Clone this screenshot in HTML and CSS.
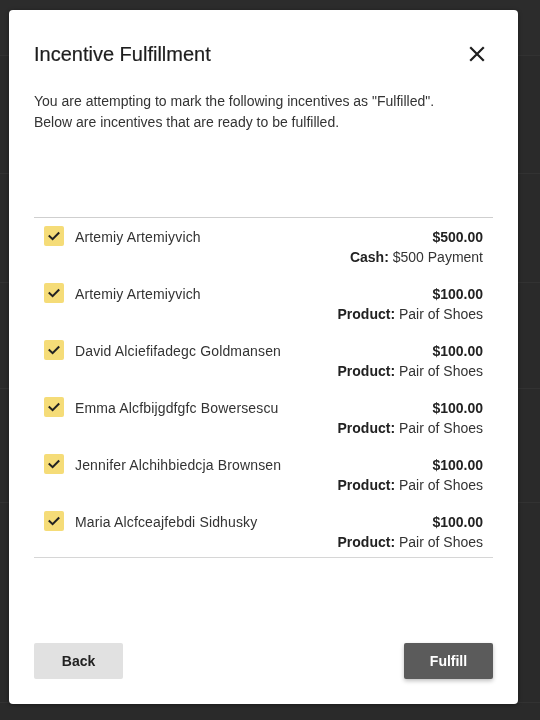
FILE: index.html
```html
<!DOCTYPE html>
<html>
<head>
<meta charset="utf-8">
<link rel="stylesheet" href="styles.css">
</head>
<body>
<div class="page">
  <div class="bg-row r1"></div>
  <div class="bg-row r2"></div>
  <div class="bg-row r3"></div>
  <div class="bg-row r4"></div>
  <div class="bg-row r5"></div>
  <div class="bg-row r6"></div>
</div>
<div class="overlay">
  <div class="modal">
    <div class="modal-head">
      <h1 class="title">Incentive Fulfillment</h1>
      <button class="close" aria-label="Close">
        <svg width="16" height="16" viewBox="0 0 16 16"><path d="M2 2 L14 14 M14 2 L2 14" stroke="#1e1e1e" stroke-width="2.2" stroke-linecap="square" fill="none"/></svg>
      </button>
    </div>
    <p class="desc">You are attempting to mark the following incentives as "Fulfilled".<br>Below are incentives that are ready to be fulfilled.</p>
    <div class="list">
      <div class="row">
        <span class="check"><svg width="20" height="20" viewBox="0 0 20 20"><path d="M5.5 10.2 L8.6 13.2 L14.5 7.2" stroke="#222" stroke-width="2" fill="none" stroke-linecap="square"/></svg></span>
        <span class="name">Artemiy Artemiyvich</span>
        <div class="info"><div class="amount">$500.00</div><div class="detail"><b>Cash:</b> $500 Payment</div></div>
      </div>
      <div class="row">
        <span class="check"><svg width="20" height="20" viewBox="0 0 20 20"><path d="M5.5 10.2 L8.6 13.2 L14.5 7.2" stroke="#222" stroke-width="2" fill="none" stroke-linecap="square"/></svg></span>
        <span class="name">Artemiy Artemiyvich</span>
        <div class="info"><div class="amount">$100.00</div><div class="detail"><b>Product:</b> Pair of Shoes</div></div>
      </div>
      <div class="row">
        <span class="check"><svg width="20" height="20" viewBox="0 0 20 20"><path d="M5.5 10.2 L8.6 13.2 L14.5 7.2" stroke="#222" stroke-width="2" fill="none" stroke-linecap="square"/></svg></span>
        <span class="name">David Alciefifadegc Goldmansen</span>
        <div class="info"><div class="amount">$100.00</div><div class="detail"><b>Product:</b> Pair of Shoes</div></div>
      </div>
      <div class="row">
        <span class="check"><svg width="20" height="20" viewBox="0 0 20 20"><path d="M5.5 10.2 L8.6 13.2 L14.5 7.2" stroke="#222" stroke-width="2" fill="none" stroke-linecap="square"/></svg></span>
        <span class="name">Emma Alcfbijgdfgfc Bowersescu</span>
        <div class="info"><div class="amount">$100.00</div><div class="detail"><b>Product:</b> Pair of Shoes</div></div>
      </div>
      <div class="row">
        <span class="check"><svg width="20" height="20" viewBox="0 0 20 20"><path d="M5.5 10.2 L8.6 13.2 L14.5 7.2" stroke="#222" stroke-width="2" fill="none" stroke-linecap="square"/></svg></span>
        <span class="name">Jennifer Alchihbiedcja Brownsen</span>
        <div class="info"><div class="amount">$100.00</div><div class="detail"><b>Product:</b> Pair of Shoes</div></div>
      </div>
      <div class="row">
        <span class="check"><svg width="20" height="20" viewBox="0 0 20 20"><path d="M5.5 10.2 L8.6 13.2 L14.5 7.2" stroke="#222" stroke-width="2" fill="none" stroke-linecap="square"/></svg></span>
        <span class="name">Maria Alcfceajfebdi Sidhusky</span>
        <div class="info"><div class="amount">$100.00</div><div class="detail"><b>Product:</b> Pair of Shoes</div></div>
      </div>
    </div>
    <div class="actions">
      <button class="btn back">Back</button>
      <button class="btn fulfill">Fulfill</button>
    </div>
  </div>
</div>
</body>
</html>
```
FILE: styles.css
```css
* { box-sizing: border-box; }
html, body { margin: 0; padding: 0; }
body {
  width: 540px;
  height: 720px;
  overflow: hidden;
  background: #2a2a2a;
  font-family: "Liberation Sans", Arial, sans-serif;
}
.page { display: flex; flex-direction: column; }
.bg-row { border-bottom: 1px solid #323232; }
.r1 { height: 56px; background: #2c2c2c; }
.r2 { height: 118px; }
.r3 { height: 109px; }
.r4 { height: 106px; }
.r5 { height: 114px; }
.r6 { height: 200px; }

.overlay {
  position: fixed;
  inset: 0;
  padding: 10px 22px 16px 9px;
  display: flex;
}
.modal {
  flex: 1;
  background: #fff;
  border-radius: 4px;
  box-shadow: 0 1px 4px rgba(0,0,0,0.4);
  padding: 30px 25px 25px 25px;
  display: flex;
  flex-direction: column;
}
.modal-head {
  display: flex;
  justify-content: space-between;
  align-items: center;
  height: 28px;
}
.title {
  margin: 0;
  font-size: 20px;
  font-weight: normal;
  color: #1e1e1e;
  line-height: 28px;
  -webkit-text-stroke: 0.2px #1e1e1e;
}
.close {
  border: 0;
  background: none;
  padding: 0;
  margin-right: 8px;
  width: 16px;
  height: 16px;
  display: flex;
}
.desc {
  margin: 23px 0 0 0;
  font-size: 14px;
  line-height: 21px;
  color: #333;
}
.list {
  margin-top: 84px;
  border-top: 1px solid #cfcfcf;
  border-bottom: 1px solid #d6d6d6;
  display: flex;
  flex-direction: column;
  gap: 3px;
}
.row {
  display: flex;
  align-items: flex-start;
  padding: 8px 10px 5px 10px;
  font-size: 14px;
  line-height: 20px;
  color: #333;
}
.check {
  width: 20px;
  height: 20px;
  border-radius: 2px;
  background: #f5dc78;
  display: flex;
  flex-shrink: 0;
}
.name { margin-left: 11px; flex: 1; padding-top: 1px; letter-spacing: 0.15px; }
.info { text-align: right; padding-top: 1px; }
.amount { font-weight: bold; color: #222; }
.detail b { color: #222; }
.actions {
  margin-top: auto;
  display: flex;
  justify-content: space-between;
}
.btn {
  width: 89px;
  height: 36px;
  border: 0;
  border-radius: 2px;
  font-family: "Liberation Sans", Arial, sans-serif;
  font-size: 14px;
  font-weight: bold;
}
.back { background: #e1e1e1; color: #222; }
.fulfill { background: #5b5b5b; color: #fff; box-shadow: 0 2px 4px rgba(0,0,0,0.25); }
```
